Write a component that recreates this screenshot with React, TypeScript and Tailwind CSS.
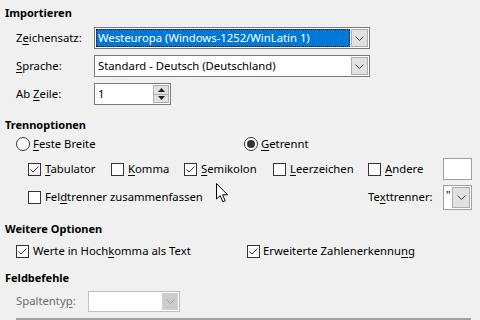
import React from 'react'

function Mn({ t, i }: { t: string; i: number }) {
  return (
    <span className="whitespace-pre">
      {t.slice(0, i)}
      <span className="underline decoration-1 underline-offset-2">{t[i]}</span>
      {t.slice(i + 1)}
    </span>
  )
}

function Chevron({ color = '#404040' }: { color?: string }) {
  return (
    <svg width="9" height="5" viewBox="0 0 9 5">
      <polyline points="0.5,0.5 4.5,4.5 8.5,0.5" fill="none" stroke={color} strokeWidth="1" />
    </svg>
  )
}

function Check({ checked }: { checked?: boolean }) {
  return (
    <div className="flex h-[13px] w-[13px] shrink-0 items-center justify-center border border-[#333333] bg-white">
      {checked && (
        <svg width="11" height="11" viewBox="0 0 11 11">
          <polyline points="1.5,5.5 4,8 9.5,2.5" fill="none" stroke="#333333" strokeWidth="1" />
        </svg>
      )}
    </div>
  )
}

function Radio({ checked }: { checked?: boolean }) {
  return (
    <div className="flex h-[14px] w-[14px] shrink-0 items-center justify-center rounded-full border border-[#333333] bg-white">
      {checked && <div className="h-[8px] w-[8px] rounded-full bg-[#333333]" />}
    </div>
  )
}

function Combo({ value, selected }: { value: string; selected?: boolean }) {
  return (
    <div className="flex h-[22px] w-[276px] border border-[#7a7a7a] bg-white">
      {selected ? (
        <div className="m-[1px] flex flex-1 items-center border border-dotted border-black bg-[#0078d7] pl-[1px] text-white">
          {value}
        </div>
      ) : (
        <div className="flex flex-1 items-center pl-[3px]">{value}</div>
      )}
      <div className="my-[1px] mr-[1px] flex w-[17px] items-center justify-center border border-[#adadad] bg-[#e1e1e1]">
        <Chevron />
      </div>
    </div>
  )
}

function Header({ children, className }: { children: React.ReactNode; className: string }) {
  return <div className={`flex items-center pl-[5px] text-[11px] font-bold ${className}`}>{children}</div>
}

export default function App() {
  return (
    <div className="relative h-[320px] w-[480px] overflow-hidden bg-[#f0f0f0] font-['Segoe_UI','Noto_Sans',sans-serif] text-[11.3px] text-black">
      <Header className="h-[26px]">Importieren</Header>

      <div className="mt-[1px] flex h-[22px] items-center pl-[16px]">
        <div className="w-[78px]">
          <Mn t="Zeichensatz:" i={1} />
        </div>
        <Combo value="Westeuropa (Windows-1252/WinLatin 1)" selected />
      </div>

      <div className="mt-[6px] flex h-[22px] items-center pl-[16px]">
        <div className="w-[78px]">
          <Mn t="Sprache:" i={0} />
        </div>
        <Combo value="Standard - Deutsch (Deutschland)" />
      </div>

      <div className="mt-[6px] flex h-[22px] items-center pl-[16px]">
        <div className="w-[78px]">
          <Mn t="Ab Zeile:" i={3} />
        </div>
        <div className="flex h-[22px] w-[77px] border border-[#7a7a7a] bg-white">
          <div className="flex flex-1 items-center pl-[3px]">1</div>
          <div className="my-[1px] mr-[1px] flex w-[16px] flex-col border border-[#adadad] bg-[#e1e1e1]">
            <div className="flex flex-1 items-center justify-center border-b border-[#adadad]">
              <svg width="7" height="4" viewBox="0 0 7 4">
                <polygon points="3.5,0 7,4 0,4" fill="#222" />
              </svg>
            </div>
            <div className="flex flex-1 items-center justify-center">
              <svg width="7" height="4" viewBox="0 0 7 4">
                <polygon points="0,0 7,0 3.5,4" fill="#222" />
              </svg>
            </div>
          </div>
        </div>
      </div>

      <Header className="mt-[9px] h-[22px]">Trennoptionen</Header>

      <div className="flex h-[16px] items-center pl-[16px]">
        <div className="flex w-[228px] items-center gap-[3px]">
          <Radio />
          <Mn t="Feste Breite" i={0} />
        </div>
        <div className="flex items-center gap-[3px]">
          <Radio checked />
          <Mn t="Getrennt" i={0} />
        </div>
      </div>

      <div className="mt-[6px] flex h-[22px] items-center pl-[28px]">
        <div className="flex w-[83px] items-center gap-[4px]">
          <Check checked />
          <Mn t="Tabulator" i={0} />
        </div>
        <div className="flex w-[73px] items-center gap-[4px]">
          <Check />
          <Mn t="Komma" i={0} />
        </div>
        <div className="flex w-[89px] items-center gap-[4px]">
          <Check checked />
          <Mn t="Semikolon" i={0} />
        </div>
        <div className="flex w-[95px] items-center gap-[4px]">
          <Check />
          <Mn t="Leerzeichen" i={0} />
        </div>
        <div className="flex w-[75px] items-center gap-[4px]">
          <Check />
          <Mn t="Andere" i={0} />
        </div>
        <div className="h-[22px] w-[29px] border border-[#a0a0a0] bg-white" />
      </div>

      <div className="mt-[5px] flex h-[25px] items-center pl-[28px]">
        <div className="flex w-[340px] items-center gap-[4px]">
          <Check />
          <Mn t="Feldtrenner zusammenfassen" i={3} />
        </div>
        <div className="w-[75px]">
          <Mn t="Texttrenner:" i={2} />
        </div>
        <div className="flex h-[25px] w-[29px] border border-[#a0a0a0] bg-white">
          <div className="flex flex-1 items-start pl-[2px] pt-[3px] leading-none">"</div>
          <div className="my-[1px] mr-[1px] flex w-[18px] items-center justify-center border border-[#adadad] bg-[#e1e1e1]">
            <Chevron />
          </div>
        </div>
      </div>

      <Header className="mt-[8px] h-[22px]">Weitere Optionen</Header>

      <div className="mt-[2px] flex h-[18px] items-center pl-[16px]">
        <div className="flex w-[231px] items-center gap-[4px]">
          <Check checked />
          <Mn t="Werte in Hochkomma als Text" i={13} />
        </div>
        <div className="flex items-center gap-[3px]">
          <Check checked />
          <Mn t="Erweiterte Zahlenerkennung" i={24} />
        </div>
      </div>

      <Header className="mt-[7px] h-[22px]">Feldbefehle</Header>

      <div className="mt-[2px] flex h-[21px] items-center pl-[16px]">
        <div className="w-[72px] text-[#6d6d6d]">
          <Mn t="Spaltentyp:" i={9} />
        </div>
        <div className="flex h-[21px] w-[92px] border border-[#bfbfbf] bg-white">
          <div className="flex-1" />
          <div className="my-[1px] mr-[1px] flex w-[16px] items-center justify-center border border-[#d0d0d0] bg-[#cccccc]">
            <Chevron color="#a0a0a0" />
          </div>
        </div>
      </div>

      <div className="ml-[16px] mt-[6px] h-[2px] w-[455px] bg-[#a0a0a0]" />

      <svg className="absolute left-[216px] top-[183px]" width="14" height="21" viewBox="0 0 14 21">
        <path d="M0.5,0.5 L0.5,16 L4.2,12.6 L6.8,18.8 L9.2,17.8 L6.6,11.8 L11.5,11.8 Z" fill="#fff" stroke="#000" strokeWidth="1" strokeLinejoin="miter" />
      </svg>
    </div>
  )
}
